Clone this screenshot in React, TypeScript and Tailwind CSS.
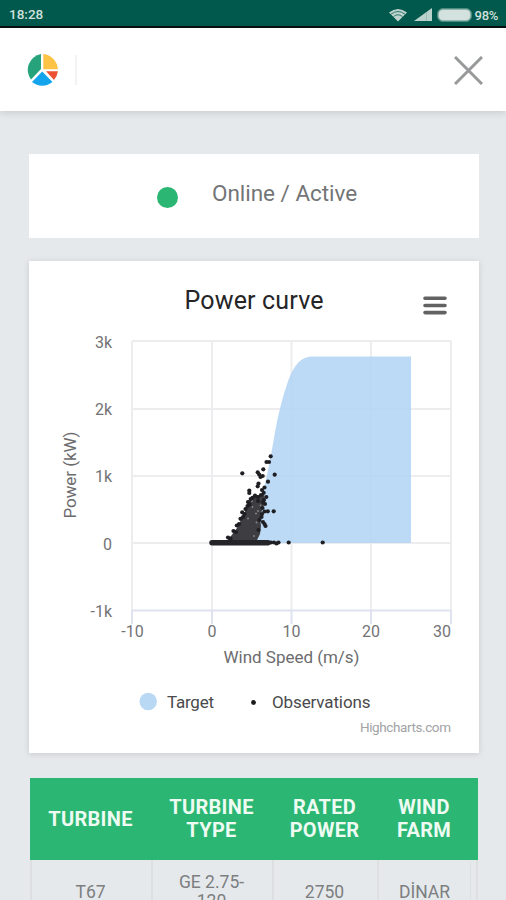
const GRID_X = [132, 212, 291.5, 371, 451];
const GRID_Y = [341, 409, 476, 543];

const Y_LABELS = [
  { label: '3k', y: 348 },
  { label: '2k', y: 415 },
  { label: '1k', y: 482 },
  { label: '0', y: 549.5 },
  { label: '-1k', y: 616.5 },
];

const X_LABELS = [
  { label: '-10', x: 132.5 },
  { label: '0', x: 212 },
  { label: '10', x: 291.5 },
  { label: '20', x: 371 },
  { label: '30', x: 442 },
];

// Loose observations around the dense cluster
const POINTS: [number, number][] = [
  [242.3, 473.3], [270.7, 456.3], [266.5, 462], [269, 462], [263.3, 469.3], [257.7, 472.3],
  [259.2, 474.5], [260.5, 477], [262.7, 476], [274.7, 474.7], [268, 481.7], [258.5, 483.5],
  [257.7, 486.3], [264.5, 487.5], [262, 490], [249.3, 490.5], [249.3, 493], [263.7, 492.8],
  [266.3, 497], [261, 495], [255, 495.7], [250.7, 499], [252.5, 497.8], [258, 497],
  [247.5, 506], [249.5, 504.5], [242.2, 512.3], [244.5, 514], [240.5, 518.8], [243, 517],
  [236.8, 525.5], [239, 524], [233.5, 531], [236, 532], [228, 537.5], [230.5, 538.5],
  [265, 504], [263, 502], [262.5, 508], [264.5, 511.5], [267.8, 511.3], [273.7, 511.3],
  [262, 514], [263, 522], [264.5, 524], [265.5, 526], [259.5, 520], [245.5, 509],
  [264, 500], [258, 501], [261.5, 517], [258.5, 530], [248, 502],
  [271, 542.5], [274, 542.5], [276.5, 543.5], [278.5, 542.5], [288.7, 542.5], [322.7, 542.5],
];

// Pale gaps left between the markers of the cluster
const GAPS: [number, number][] = [
  [248, 518.5], [256.5, 522.5], [258, 511], [254, 536], [252.5, 507], [260.5, 505.5],
  [252, 501], [256, 513.5],
];

const COLUMNS = ['TURBINE', 'TURBINE TYPE', 'RATED POWER', 'WIND FARM'];
const ROW = ['T67', 'GE 2.75-120', '2750', 'DİNAR'];

function StatusBar() {
  return (
    <div className="flex h-7 items-center justify-between border-b-2 border-[#04110f] bg-[#00594c] pl-[9px] pr-2 text-[13.5px] font-medium text-[#cfe0dc]">
      <span className="pt-[3px]">18:28</span>
      <div className="flex items-center pt-[3px]">
        <svg width="20" height="14" viewBox="0 0 20 14">
          <path d="M10 13.500 1 4.500Q10-2.500 19 4.500Z" fill="#bcd3ce" />
          <path d="M3 6.200Q10 .8 17 6.200M5.600 8.500Q10 5 14.400 8.500" fill="none" stroke="#2f776c" strokeWidth="1" />
        </svg>
        <svg className="ml-[6px]" width="18" height="13" viewBox="0 0 18 13">
          <path d="M0 13 18 0V13Z" fill="#b9d2cc" />
          <path d="M12.500 4V13" stroke="#9fc0b9" strokeWidth="1" />
        </svg>
        <div className="ml-[5px] h-[14px] w-[35px] rounded-[6px] border border-[#4d8b80] bg-[#8fb5ad] p-px">
          <div className="h-full rounded-[4px] bg-[#d3e2de]" />
        </div>
        <span className="ml-[3px] pt-[2px] text-[13px] tracking-[-0.3px]">98%</span>
      </div>
    </div>
  );
}

function Logo() {
  return (
    <svg width="32" height="32" viewBox="0 0 32 32">
      <path d="M15 0.100V15L5 25.500A16 16 0 0 1 15 0.100Z" fill="#26a37a" />
      <path d="M17.300 0.100A16 16 0 0 1 31.900 15.200H17.300Z" fill="#fdc345" />
      <path d="M20 17.300H31.900A16 16 0 0 1 28 26Z" fill="#ea5233" />
      <path d="M16.200 17.500 26.500 28A16 16 0 0 1 6 28Z" fill="#14a4ee" />
    </svg>
  );
}

function Header() {
  return (
    <header className="flex h-[83px] items-center justify-between bg-white pl-[26px] pr-[23px] pt-px shadow-[0_2px_7px_rgba(0,0,0,0.12)]">
      <div className="flex items-center gap-[17px]">
        <Logo />
        <div className="h-[30px] w-[2px] bg-[#f5f2f2]" />
      </div>
      <svg width="29" height="29" viewBox="0 0 29 29" stroke="#98999a" strokeWidth="3">
        <path d="M1 1 28 28M28 1 1 28" />
      </svg>
    </header>
  );
}

function PowerCurve() {
  return (
    <svg className="block" width="450" height="492" viewBox="29 261 450 492">
      <text x="254" y="308.500" fontSize="25" textAnchor="middle" fill="#252527" textLength="139">Power curve</text>
      <path d="M425 298.300H445M425 305.500H445M425 312.600H445" stroke="#626262" strokeWidth="3.600" strokeLinecap="round" />

      <g stroke="#ededf0" strokeWidth="2">
        {GRID_X.map((x) => <path key={x} d={`M${x} 341V610`} />)}
        {GRID_Y.map((y) => <path key={y} d={`M132 ${y}H451`} />)}
      </g>
      <path
        d="M231 543C248 539 256 520 261 499C267 478 270 460 273.500 441C277 420 281 402 286.500 386C293 366 300 356.500 313 356.500H411V543Z"
        fill="#b3d5f4"
        fillOpacity="0.88"
      />
      <g stroke="#dfe3f0" strokeWidth="2">
        <path d="M132 610.500H451" />
        {GRID_X.map((x) => <path key={x} d={`M${x} 610V624`} />)}
      </g>

      <path
        d="M225 543 231 536 237 528 242 518 246 509 248 501 253 496 264 494 265 502 262 510 260 518 261 526 260 534 257 540 261 543Z"
        fill="#3e3e42"
      />
      <g fill="#88898d">
        {GAPS.map(([x, y]) => <circle key={`${x}-${y}`} cx={x} cy={y} r="0.900" />)}
      </g>
      <path d="M212 542.800H268" stroke="#242429" strokeWidth="5.500" strokeLinecap="round" />
      <g fill="#1f1f23">
        {POINTS.map(([x, y]) => <circle key={`${x}-${y}`} cx={x} cy={y} r="2.100" />)}
      </g>

      <g fontSize="16" fill="#737375">
        {Y_LABELS.map(({ label, y }) => <text key={label} x="112" y={y} textAnchor="end">{label}</text>)}
        {X_LABELS.map(({ label, x }) => <text key={label} x={x} y="637" textAnchor="middle">{label}</text>)}
      </g>
      <g fontSize="17" fill="#6c6c6e">
        <text x="291.500" y="663" textAnchor="middle" textLength="136">Wind Speed (m/s)</text>
        <text transform="translate(76 475) rotate(-90)" textAnchor="middle" textLength="87">Power (kW)</text>
      </g>

      <circle cx="148.200" cy="701.500" r="8.700" fill="#b9d8f4" />
      <circle cx="253.500" cy="702.500" r="2.400" fill="#1a1a1c" />
      <g fontSize="17" fill="#4a4a4c">
        <text x="167" y="708" textLength="47">Target</text>
        <text x="272" y="708" textLength="98.500">Observations</text>
      </g>
      <text x="451" y="732" fontSize="13.500" textAnchor="end" fill="#a3a3a5" textLength="91">Highcharts.com</text>
    </svg>
  );
}

function TurbineTable() {
  return (
    <div className="ml-[30px] mt-[25px] grid h-[142px] w-[448px] grid-cols-[121px_121px_105px_101px] grid-rows-[82px_60px] text-center">
      {COLUMNS.map((name, i) => (
        <div key={name} className={`flex items-center justify-center bg-[#2bb673] pl-3 text-[20px] font-bold leading-[23px] tracking-[0.3px] text-[#edfbf2] ${i === 3 ? 'pr-[19px]' : 'pr-3'}`}>
          {name}
        </div>
      ))}
      {ROW.map((value, i) => (
        <div key={value} className={`flex items-center justify-center border-l-2 border-[#dddfe1] pt-1 text-[17.500px] leading-[19px] text-[#7c7e80] ${i === 3 ? 'border-r-2' : 'pr-0.5'}`}>
          <span className={i === 1 ? 'w-[68px]' : i === 3 ? 'flex-1' : ''}>{value}</span>
          {i === 3 && <div className="-mt-1 h-full w-[6px] border-l border-[#dddfe1]" />}
        </div>
      ))}
    </div>
  );
}

export default function App() {
  return (
    <div className="h-[900px] w-[506px] overflow-hidden bg-[#e5e9ec] font-['Roboto',sans-serif]">
      <StatusBar />
      <Header />
      <main>
        <div className="ml-[29px] mt-[43px] flex h-[84px] w-[450px] items-center bg-white pl-32">
          <div className="mt-[3px] size-[21px] rounded-full bg-[#2bb673]" />
          <span className="-mt-1 ml-[34px] text-[22.5px] tracking-[-0.03px] text-[#747577]">Online / Active</span>
        </div>
        <div className="ml-[29px] mt-[23px] h-[492px] w-[450px] bg-white shadow-[0_1px_6px_rgba(0,0,0,0.13)]">
          <PowerCurve />
        </div>
        <TurbineTable />
      </main>
    </div>
  );
}
